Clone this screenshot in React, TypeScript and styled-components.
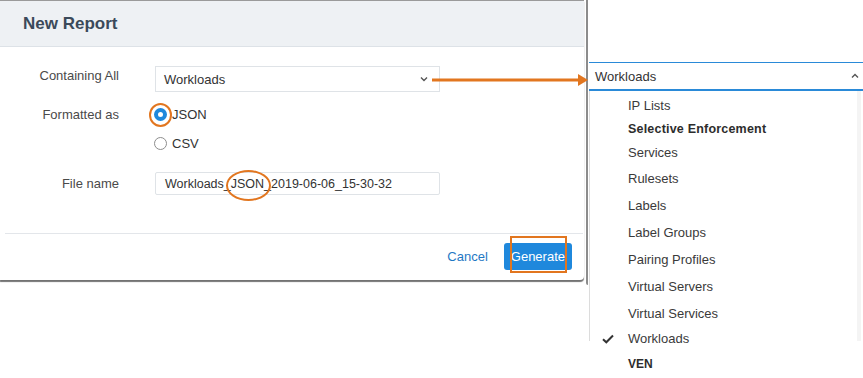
import React from "react";
import styled, { createGlobalStyle } from "styled-components";

const GlobalStyle = createGlobalStyle`
  body {
    margin: 0;
    background: #fff;
    font-family: "Liberation Sans", Arial, sans-serif;
  }
`;

const ORANGE = "#e2761f";
const BLUE = "#1f88dc";

const menuItems: { label: string; kind?: "header" | "group"; checked?: boolean; h?: number }[] = [
  { label: "IP Lists", h: 23 },
  { label: "Selective Enforcement", kind: "header", h: 23 },
  { label: "Services", h: 25 },
  { label: "Rulesets" },
  { label: "Labels" },
  { label: "Label Groups" },
  { label: "Pairing Profiles" },
  { label: "Virtual Servers" },
  { label: "Virtual Services", h: 26 },
  { label: "Workloads", checked: true, h: 25 },
  { label: "VEN", kind: "group", h: 26 },
];

const App: React.FC = (): React.ReactElement => {
  return (
    <>
      <GlobalStyle />
      <SPage>
        <SLeft>
          <SModal>
            <SHeader>New Report</SHeader>
            <SBody>
              <SRow>
                <SLabel>Containing All</SLabel>
                <SSelect>
                  <span>Workloads</span>
                  <svg width="8" height="6" viewBox="0 0 8 6">
                    <path d="M1 1.5 L4 4.5 L7 1.5" fill="none" stroke="#555" strokeWidth="1.4" />
                  </svg>
                </SSelect>
              </SRow>
              <SRow $top={13}>
                <SLabel>Formatted as</SLabel>
                <SRadioGroup>
                  <SRadioLine>
                    <SRadio $on />
                    JSON
                  </SRadioLine>
                  <SRadioLine>
                    <SRadio />
                    CSV
                  </SRadioLine>
                </SRadioGroup>
              </SRow>
              <SRow $top={21}>
                <SLabel $center>File name</SLabel>
                <SInput>Workloads_JSON_2019-06-06_15-30-32</SInput>
              </SRow>
            </SBody>
            <SFooter>
              <SCancel>Cancel</SCancel>
              <SButton>Generate</SButton>
            </SFooter>
          </SModal>
          <SEdge />
        </SLeft>

        <SRight>
          <SDropHead>
            <span>Workloads</span>
            <svg width="8" height="6" viewBox="0 0 8 6">
              <path d="M1 4.5 L4 1.5 L7 4.5" fill="none" stroke="#555" strokeWidth="1.4" />
            </svg>
          </SDropHead>
          <SList>
            {menuItems.map((item) => (
              <SItem key={item.label} $kind={item.kind} $h={item.h}>
                <SCheck>
                  {item.checked && (
                    <svg width="12" height="10" viewBox="0 0 12 10">
                      <path d="M1 5.2 L4.3 8.3 L11 1.5" fill="none" stroke="#333" strokeWidth="2" />
                    </svg>
                  )}
                </SCheck>
                {item.label}
              </SItem>
            ))}
          </SList>
        </SRight>

        <SCircle />
        <SEllipse />
        <SRect />
        <SArrow width="160" height="14" viewBox="0 0 160 14">
          <line x1="0" y1="7" x2="148" y2="7" stroke={ORANGE} strokeWidth="3" />
          <path d="M146 1 L156 7 L146 13 Z" fill={ORANGE} />
        </SArrow>
      </SPage>
    </>
  );
};

const SPage = styled.div`
  position: relative;
  display: flex;
  width: 863px;
  height: 378px;
  overflow: hidden;
`;

const SLeft = styled.div`
  display: flex;
  width: 589px;
  height: 286px;
  flex-shrink: 0;
`;

const SModal = styled.div`
  box-sizing: border-box;
  display: flex;
  flex-direction: column;
  width: 584px;
  height: 280px;
  background: #fff;
  border-top: 1px solid #9a9a9a;
  border-bottom-right-radius: 4px;
  box-shadow: 0 2px 1px rgba(0, 0, 0, 0.55);
`;

const SEdge = styled.div`
  width: 2px;
  height: 285px;
  margin-left: 2px;
  background: #8c8c8c;
  border-bottom-left-radius: 2px;
`;

const SHeader = styled.div`
  height: 45px;
  padding-left: 23px;
  display: flex;
  align-items: center;
  background: #eef1f4;
  border-bottom: 1px solid #dde2e7;
  color: #3b4a5a;
  font-size: 17px;
  font-weight: bold;
`;

const SBody = styled.div`
  flex: 1;
  padding-top: 19px;
`;

const SRow = styled.div<{ $top?: number }>`
  display: grid;
  grid-template-columns: 119px 285px;
  column-gap: 36px;
  margin-top: ${(p) => p.$top ?? 0}px;
`;

const SLabel = styled.div<{ $center?: boolean }>`
  text-align: right;
  font-size: 13px;
  color: #4a4a4a;
  align-self: ${(p) => (p.$center ? "center" : "start")};
  padding-top: ${(p) => (p.$center ? 0 : 2)}px;
`;

const SSelect = styled.div`
  box-sizing: border-box;
  height: 26px;
  padding: 0 11px 0 8px;
  display: flex;
  align-items: center;
  justify-content: space-between;
  border: 1px solid #dfe3e7;
  font-size: 13px;
  color: #333;
`;

const SInput = styled.div`
  box-sizing: border-box;
  height: 23px;
  padding: 0 9px;
  display: flex;
  align-items: center;
  border: 1px solid #dfe3e7;
  border-radius: 2px;
  font-size: 12.5px;
  color: #333;
`;

const SRadioGroup = styled.div`
  display: flex;
  flex-direction: column;
  gap: 13px;
  margin-left: -1px;
  padding-top: 1px;
`;

const SRadioLine = styled.div`
  display: flex;
  align-items: center;
  height: 16px;
  gap: 5px;
  font-size: 13px;
  color: #333;
`;

const SRadio = styled.span<{ $on?: boolean }>`
  box-sizing: border-box;
  width: 13px;
  height: 13px;
  border-radius: 50%;
  background: #fff;
  border: ${(p) => (p.$on ? `4px solid ${BLUE}` : "1px solid #8d8d8d")};
`;

const SFooter = styled.div`
  box-sizing: border-box;
  height: 47px;
  margin: 0 1px 0 5px;
  padding: 0 11px 2px 0;
  border-top: 1px solid #e3e6ea;
  display: flex;
  align-items: center;
  justify-content: flex-end;
  gap: 16px;
`;

const SCancel = styled.span`
  color: #1f78c4;
  font-size: 13px;
`;

const SButton = styled.div`
  height: 27px;
  padding: 0 7px;
  display: flex;
  align-items: center;
  background: ${BLUE};
  color: #fff;
  font-size: 13px;
  border-radius: 3px;
`;

const SRight = styled.div`
  flex: 1;
  padding-top: 62px;
`;

const SDropHead = styled.div`
  box-sizing: border-box;
  height: 29px;
  padding: 0 4px 0 6px;
  display: flex;
  align-items: center;
  justify-content: space-between;
  border-top: 1px solid #2a8ad8;
  border-bottom: 2px solid #2a8ad8;
  font-size: 13px;
  color: #333;
`;

const SList = styled.div`
  box-sizing: border-box;
  width: 272px;
  height: 250px;
  padding-top: 3px;
  border-left: 1px solid #dcdcdc;
  border-right: 4px solid #f4f4f4;
`;

const SItem = styled.div<{ $kind?: "header" | "group"; $h?: number }>`
  display: flex;
  align-items: center;
  height: ${(p) => p.$h ?? 27}px;
  font-size: ${(p) => (p.$kind === "group" ? 12 : p.$kind === "header" ? 12.5 : 13)}px;
  font-weight: ${(p) => (p.$kind ? "bold" : "normal")};
  letter-spacing: ${(p) => (p.$kind === "header" ? 0.2 : 0)}px;
  color: ${(p) => (p.$kind ? "#2d2d2d" : "#3a3a3a")};
`;

const SCheck = styled.span`
  width: 38px;
  padding-left: 12px;
  box-sizing: border-box;
  display: flex;
  align-items: center;
`;

const SCircle = styled.div`
  position: absolute;
  left: 149px;
  top: 103px;
  width: 19px;
  height: 20px;
  border: 2px solid ${ORANGE};
  border-radius: 50%;
`;

const SEllipse = styled.div`
  position: absolute;
  left: 226px;
  top: 170px;
  width: 41px;
  height: 27px;
  border: 2px solid ${ORANGE};
  border-radius: 50%;
`;

const SRect = styled.div`
  position: absolute;
  left: 510px;
  top: 236px;
  width: 53px;
  height: 33px;
  border: 2px solid ${ORANGE};
`;

const SArrow = styled.svg`
  position: absolute;
  left: 432px;
  top: 73px;
`;

export default App;
